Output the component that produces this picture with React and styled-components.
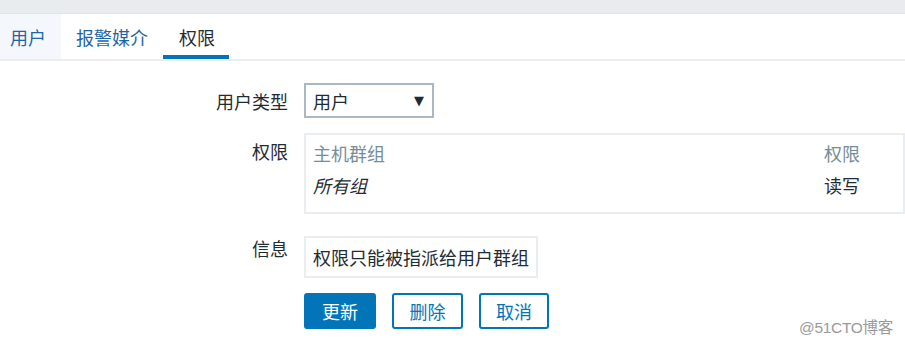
import React from "react";
import styled, { createGlobalStyle } from "styled-components";

const Global = createGlobalStyle`
  html, body { margin: 0; padding: 0; background: #ffffff; overflow: hidden; }
  body { font-family: "Noto Sans CJK SC", "Noto Sans", Arial, sans-serif; color: #1f2c33; }
  #root { width: 905px; height: 347px; position: relative; overflow: hidden; }
`;

const TopBar = styled.div`
  height: 13px;
  background: #e9ecef;
  border-bottom: 1px solid #dfe4e7;
`;

const TabNav = styled.nav`
  display: flex;
  height: 45px;
  border-bottom: 2px solid #ebeef0;
`;

const Tab = styled.div`
  display: flex;
  align-items: center;
  padding: 4px ${(p) => p.$pr}px 0 ${(p) => p.$pl}px;
  font-size: 18px;
  line-height: 24px;
  box-sizing: border-box;
  color: ${(p) => (p.$active ? "#1f2c33" : "#1f65a6")};
  background: ${(p) => (p.$hover ? "#f4f8fd" : "transparent")};
  border-bottom: 4px solid ${(p) => (p.$active ? "#0275b8" : "transparent")};
`;

const Form = styled.div`
  display: flex;
  flex-direction: column;
  padding-top: 22px;
`;

const Row = styled.div`
  display: flex;
  align-items: flex-start;
  gap: 16px;
  margin-bottom: ${(p) => p.$mb}px;
`;

const Label = styled.div`
  width: 288px;
  flex: none;
  text-align: right;
  font-size: 18px;
  line-height: 24px;
  padding-top: ${(p) => p.$top}px;
  color: #1f2c33;
`;

const Select = styled.div`
  width: 130px;
  height: 35px;
  box-sizing: border-box;
  border: 2px solid #acb8c1;
  display: flex;
  align-items: center;
  justify-content: space-between;
  padding: 0 8px 0 7px;
  font-size: 18px;
  background: #fff;
`;

const Arrow = styled.span`
  font-size: 13px;
  color: #1f2c33;
  font-family: "DejaVu Sans", sans-serif;
`;

const PermBox = styled.div`
  width: 640px;
  height: 81px;
  box-sizing: border-box;
  border: 2px solid #ebeef0;
  padding: 2px 7px;
  display: grid;
  grid-template-columns: 511px 1fr;
  grid-auto-rows: 32px;
  font-size: 18px;
  align-items: center;
`;

const HeadCell = styled.div`
  color: #768d99;
  line-height: 24px;
`;

const Cell = styled.div`
  color: #1f2c33;
  line-height: 24px;
  font-style: ${(p) => (p.$italic ? "italic" : "normal")};
`;

const Info = styled.div`
  height: 42px;
  box-sizing: border-box;
  border: 2px solid #ebeef0;
  padding: 0 7px;
  display: flex;
  align-items: center;
  font-size: 18px;
  white-space: nowrap;
`;

const Buttons = styled.div`
  display: flex;
  gap: 16px;
  padding-left: 304px;
`;

const Button = styled.div`
  width: ${(p) => p.$w}px;
  height: 36px;
  box-sizing: border-box;
  border-radius: 3px;
  border: 2px solid #0275b8;
  background: ${(p) => (p.$primary ? "#0275b8" : "#fff")};
  color: ${(p) => (p.$primary ? "#fff" : "#0275b8")};
  display: flex;
  align-items: center;
  justify-content: center;
  font-size: 18px;
`;

const Watermark = styled.div`
  position: absolute;
  right: 12px;
  bottom: 10px;
  font-size: 15.5px;
  letter-spacing: -0.3px;
  color: #9a9a9a;
  font-family: "Liberation Sans", "Noto Sans CJK SC", sans-serif;
`;

export default function App() {
  return (
    <>
      <Global />
      <TopBar />
      <TabNav>
        <Tab $hover $pl={10} $pr={15}>用户</Tab>
        <Tab $pl={15} $pr={15}>报警媒介</Tab>
        <Tab $active $pl={16} $pr={14}>权限</Tab>
      </TabNav>
      <Form>
        <Row $mb={15}>
          <Label $top={6}>用户类型</Label>
          <Select>
            <span>用户</span>
            <Arrow>▼</Arrow>
          </Select>
        </Row>
        <Row $mb={22}>
          <Label $top={6}>权限</Label>
          <PermBox>
            <HeadCell>主机群组</HeadCell>
            <HeadCell>权限</HeadCell>
            <Cell $italic>所有组</Cell>
            <Cell>读写</Cell>
          </PermBox>
        </Row>
        <Row $mb={15}>
          <Label $top={0}>信息</Label>
          <Info>权限只能被指派给用户群组</Info>
        </Row>
        <Buttons>
          <Button $primary $w={72}>更新</Button>
          <Button $w={71}>删除</Button>
          <Button $w={70}>取消</Button>
        </Buttons>
      </Form>
      <Watermark>@51CTO博客</Watermark>
    </>
  );
}
